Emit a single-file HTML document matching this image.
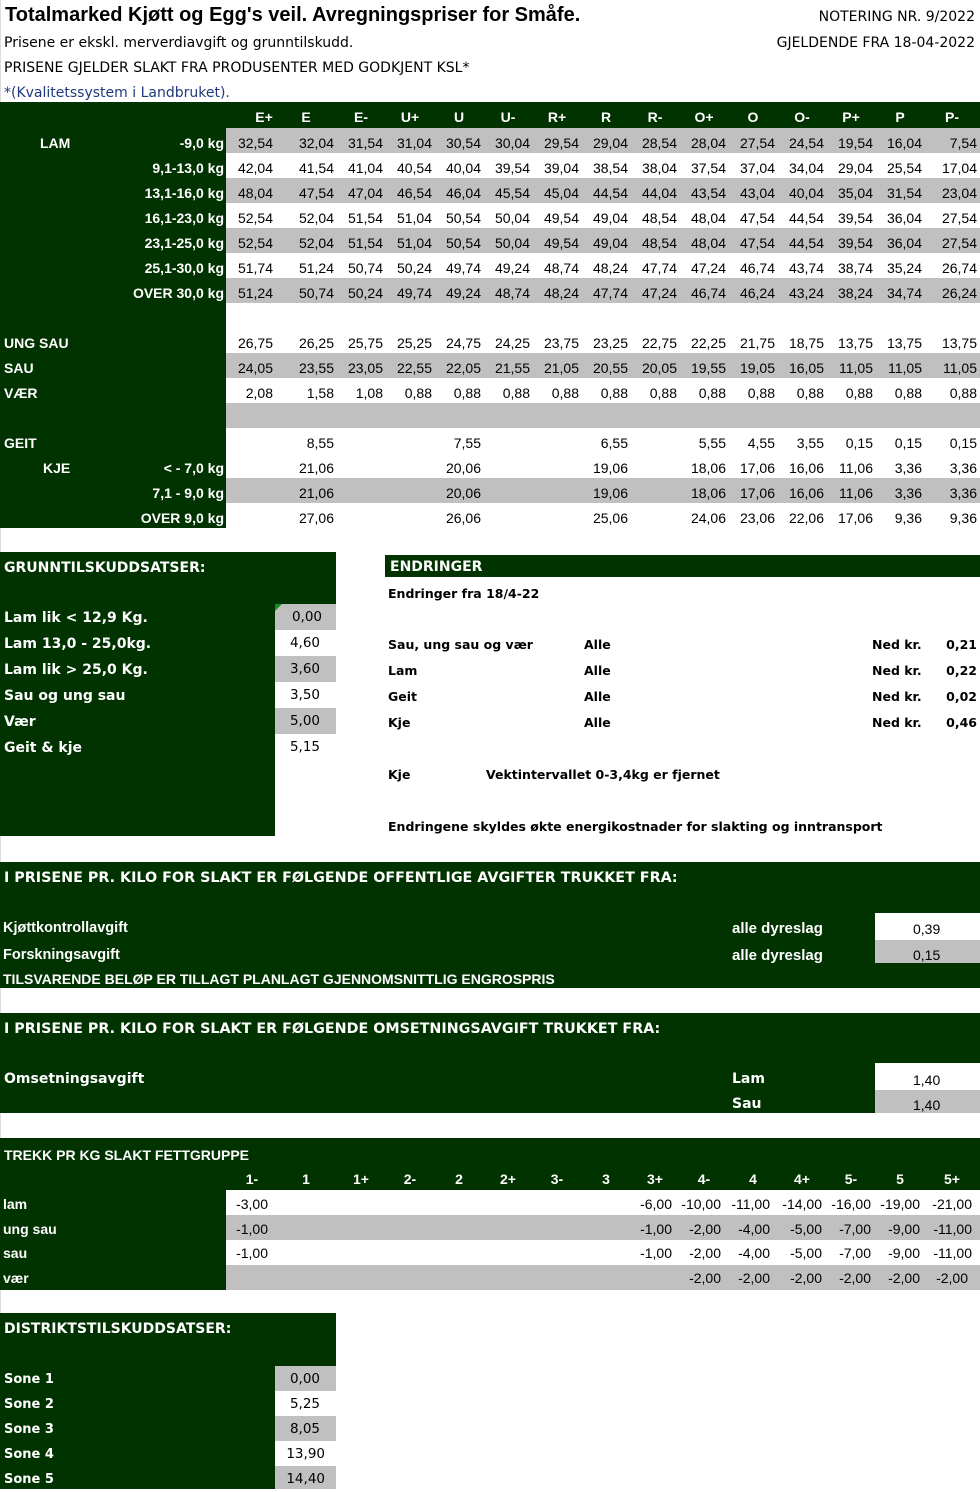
<!DOCTYPE html>
<html><head><meta charset="utf-8">
<style>
*{margin:0;padding:0;box-sizing:border-box}
body{width:980px;height:1489px;position:relative;background:#fff;font-family:"Liberation Sans",Arial,sans-serif;color:#000;overflow:hidden}
.a{position:absolute;white-space:nowrap}
.g{position:absolute;background:#003300}
.gr{position:absolute;background:#c0c0c0}
.w{color:#fff;font-weight:bold}
.vd{font-family:"DejaVu Sans",Verdana,sans-serif;font-size:14px}
.row{position:absolute;left:226px;width:754px;height:25px;display:grid;grid-template-columns:47px 61px repeat(12,49px) 55px;font-size:14px;line-height:25px;padding-top:3px}
.row span{text-align:right}
.hd{position:absolute;left:226px;width:754px;top:105px;height:25px;font-size:14px;font-weight:bold;color:#fff;line-height:25px}
.hd span{position:absolute;transform:translateX(-50%)}
.lb{position:absolute;font-size:14px;font-weight:bold;color:#fff;line-height:25px;white-space:nowrap}
.r{text-align:right}
.tk{position:absolute;left:226px;width:754px;height:25px;font-family:"Liberation Sans Narrow","Liberation Sans",sans-serif;font-size:14px;line-height:25px}
.tk span{position:absolute;text-align:right;width:60px}
.tl{position:absolute;left:3px;font-family:"Liberation Sans Narrow","Liberation Sans",sans-serif;font-size:14px;font-weight:bold;color:#fff;line-height:25px}
.cn{font-family:"Liberation Sans Narrow","Liberation Sans",sans-serif;font-weight:bold;font-size:15px;color:#fff}
.vv{position:absolute;font-family:"DejaVu Sans",Verdana,sans-serif;font-size:13.5px;text-align:right;line-height:27px}
.e{font-weight:bold;font-size:12.5px}
.s{font-size:13px}
</style></head><body>
<div style="position:absolute;left:0;top:0;width:1px;height:1489px;background:#ddd"></div>
<div class="a" style="left:5px;top:4px;font-size:20px;font-weight:bold">Totalmarked Kjøtt og Egg's veil. Avregningspriser for Småfe.</div>
<div class="a vd" style="right:5px;top:9px">NOTERING NR. 9/2022</div>
<div class="a vd" style="left:4px;top:35px">Prisene er ekskl. merverdiavgift og grunntilskudd.</div>
<div class="a vd" style="right:5px;top:35px">GJELDENDE FRA 18-04-2022</div>
<div class="a vd" style="left:4px;top:60px">PRISENE GJELDER SLAKT FRA PRODUSENTER MED GODKJENT KSL*</div>
<div class="a vd" style="left:4px;top:85px;color:#1f3a7a">*(Kvalitetssystem i Landbruket).</div>

<div class="g" style="left:0;top:102px;width:980px;height:26px"></div>
<div class="g" style="left:0;top:102px;width:226px;height:426px"></div>
<div class="gr" style="left:226px;top:128px;width:754px;height:25px"></div>
<div class="gr" style="left:226px;top:178px;width:754px;height:25px"></div>
<div class="gr" style="left:226px;top:228px;width:754px;height:25px"></div>
<div class="gr" style="left:226px;top:278px;width:754px;height:25px"></div>
<div class="gr" style="left:226px;top:353px;width:754px;height:25px"></div>
<div class="gr" style="left:226px;top:403px;width:754px;height:25px"></div>
<div class="gr" style="left:226px;top:478px;width:754px;height:25px"></div>
<div class="hd"><span style="left:38px">E+</span><span style="left:80px">E</span><span style="left:135px">E-</span><span style="left:184px">U+</span><span style="left:233px">U</span><span style="left:282px">U-</span><span style="left:331px">R+</span><span style="left:380px">R</span><span style="left:429px">R-</span><span style="left:478px">O+</span><span style="left:527px">O</span><span style="left:576px">O-</span><span style="left:625px">P+</span><span style="left:674px">P</span><span style="left:726px">P-</span></div>

<div class="lb" style="left:40px;top:131px">LAM</div>
<div class="lb r" style="right:756px;top:131px">-9,0 kg</div>
<div class="lb r" style="right:756px;top:156px">9,1-13,0 kg</div>
<div class="lb r" style="right:756px;top:181px">13,1-16,0 kg</div>
<div class="lb r" style="right:756px;top:206px">16,1-23,0 kg</div>
<div class="lb r" style="right:756px;top:231px">23,1-25,0 kg</div>
<div class="lb r" style="right:756px;top:256px">25,1-30,0 kg</div>
<div class="lb r" style="right:756px;top:281px">OVER 30,0 kg</div>
<div class="lb" style="left:4px;top:331px">UNG SAU</div>
<div class="lb" style="left:4px;top:356px">SAU</div>
<div class="lb" style="left:4px;top:381px">VÆR</div>
<div class="lb" style="left:4px;top:431px">GEIT</div>
<div class="lb" style="left:43px;top:456px">KJE</div>
<div class="lb r" style="right:756px;top:456px">&lt; - 7,0 kg</div>
<div class="lb r" style="right:756px;top:481px">7,1 - 9,0 kg</div>
<div class="lb r" style="right:756px;top:506px">OVER 9,0 kg</div>

<div class="row" style="top:128px"><span>32,54</span><span>32,04</span><span>31,54</span><span>31,04</span><span>30,54</span><span>30,04</span><span>29,54</span><span>29,04</span><span>28,54</span><span>28,04</span><span>27,54</span><span>24,54</span><span>19,54</span><span>16,04</span><span>7,54</span></div>
<div class="row" style="top:153px"><span>42,04</span><span>41,54</span><span>41,04</span><span>40,54</span><span>40,04</span><span>39,54</span><span>39,04</span><span>38,54</span><span>38,04</span><span>37,54</span><span>37,04</span><span>34,04</span><span>29,04</span><span>25,54</span><span>17,04</span></div>
<div class="row" style="top:178px"><span>48,04</span><span>47,54</span><span>47,04</span><span>46,54</span><span>46,04</span><span>45,54</span><span>45,04</span><span>44,54</span><span>44,04</span><span>43,54</span><span>43,04</span><span>40,04</span><span>35,04</span><span>31,54</span><span>23,04</span></div>
<div class="row" style="top:203px"><span>52,54</span><span>52,04</span><span>51,54</span><span>51,04</span><span>50,54</span><span>50,04</span><span>49,54</span><span>49,04</span><span>48,54</span><span>48,04</span><span>47,54</span><span>44,54</span><span>39,54</span><span>36,04</span><span>27,54</span></div>
<div class="row" style="top:228px"><span>52,54</span><span>52,04</span><span>51,54</span><span>51,04</span><span>50,54</span><span>50,04</span><span>49,54</span><span>49,04</span><span>48,54</span><span>48,04</span><span>47,54</span><span>44,54</span><span>39,54</span><span>36,04</span><span>27,54</span></div>
<div class="row" style="top:253px"><span>51,74</span><span>51,24</span><span>50,74</span><span>50,24</span><span>49,74</span><span>49,24</span><span>48,74</span><span>48,24</span><span>47,74</span><span>47,24</span><span>46,74</span><span>43,74</span><span>38,74</span><span>35,24</span><span>26,74</span></div>
<div class="row" style="top:278px"><span>51,24</span><span>50,74</span><span>50,24</span><span>49,74</span><span>49,24</span><span>48,74</span><span>48,24</span><span>47,74</span><span>47,24</span><span>46,74</span><span>46,24</span><span>43,24</span><span>38,24</span><span>34,74</span><span>26,24</span></div>
<div class="row" style="top:328px"><span>26,75</span><span>26,25</span><span>25,75</span><span>25,25</span><span>24,75</span><span>24,25</span><span>23,75</span><span>23,25</span><span>22,75</span><span>22,25</span><span>21,75</span><span>18,75</span><span>13,75</span><span>13,75</span><span>13,75</span></div>
<div class="row" style="top:353px"><span>24,05</span><span>23,55</span><span>23,05</span><span>22,55</span><span>22,05</span><span>21,55</span><span>21,05</span><span>20,55</span><span>20,05</span><span>19,55</span><span>19,05</span><span>16,05</span><span>11,05</span><span>11,05</span><span>11,05</span></div>
<div class="row" style="top:378px"><span>2,08</span><span>1,58</span><span>1,08</span><span>0,88</span><span>0,88</span><span>0,88</span><span>0,88</span><span>0,88</span><span>0,88</span><span>0,88</span><span>0,88</span><span>0,88</span><span>0,88</span><span>0,88</span><span>0,88</span></div>
<div class="row" style="top:428px"><span></span><span>8,55</span><span></span><span></span><span>7,55</span><span></span><span></span><span>6,55</span><span></span><span>5,55</span><span>4,55</span><span>3,55</span><span>0,15</span><span>0,15</span><span>0,15</span></div>
<div class="row" style="top:453px"><span></span><span>21,06</span><span></span><span></span><span>20,06</span><span></span><span></span><span>19,06</span><span></span><span>18,06</span><span>17,06</span><span>16,06</span><span>11,06</span><span>3,36</span><span>3,36</span></div>
<div class="row" style="top:478px"><span></span><span>21,06</span><span></span><span></span><span>20,06</span><span></span><span></span><span>19,06</span><span></span><span>18,06</span><span>17,06</span><span>16,06</span><span>11,06</span><span>3,36</span><span>3,36</span></div>
<div class="row" style="top:503px"><span></span><span>27,06</span><span></span><span></span><span>26,06</span><span></span><span></span><span>25,06</span><span></span><span>24,06</span><span>23,06</span><span>22,06</span><span>17,06</span><span>9,36</span><span>9,36</span></div>

<div class="g" style="left:0;top:552px;width:336px;height:52px"></div>
<div class="g" style="left:0;top:552px;width:275px;height:284px"></div>
<div class="a vd w" style="left:4px;top:560px">GRUNNTILSKUDDSATSER:</div>
<div class="gr" style="left:275px;top:604px;width:61px;height:26px"></div>
<div style="position:absolute;left:275px;top:604px;width:0;height:0;border-top:7px solid #1a8a1a;border-right:7px solid transparent"></div>
<div class="gr" style="left:275px;top:656px;width:61px;height:26px"></div>
<div class="gr" style="left:275px;top:708px;width:61px;height:26px"></div>
<div class="a vd w" style="left:4px;top:610px">Lam lik &lt; 12,9 Kg.</div>
<div class="a vd w" style="left:4px;top:636px">Lam 13,0 - 25,0kg.</div>
<div class="a vd w" style="left:4px;top:662px">Lam lik &gt; 25,0 Kg.</div>
<div class="a vd w" style="left:4px;top:688px">Sau og ung sau</div>
<div class="a vd w" style="left:4px;top:714px">Vær</div>
<div class="a vd w" style="left:4px;top:740px">Geit &amp; kje</div>
<div class="vv" style="left:275px;width:47px;top:604px">0,00</div>
<div class="vv" style="left:275px;width:45px;top:630px">4,60</div>
<div class="vv" style="left:275px;width:45px;top:656px">3,60</div>
<div class="vv" style="left:275px;width:45px;top:682px">3,50</div>
<div class="vv" style="left:275px;width:45px;top:708px">5,00</div>
<div class="vv" style="left:275px;width:45px;top:734px">5,15</div>

<div class="g" style="left:385px;top:555px;width:595px;height:22px"></div>
<div class="a vd w" style="left:390px;top:559px">ENDRINGER</div>
<div class="a vd e" style="left:388px;top:586px">Endringer fra 18/4-22</div>
<div class="a vd e" style="left:388px;top:637px">Sau, ung sau og vær</div>
<div class="a vd e" style="left:388px;top:663px">Lam</div>
<div class="a vd e" style="left:388px;top:689px">Geit</div>
<div class="a vd e" style="left:388px;top:715px">Kje</div>
<div class="a vd e" style="left:584px;top:637px">Alle</div>
<div class="a vd e" style="left:584px;top:663px">Alle</div>
<div class="a vd e" style="left:584px;top:689px">Alle</div>
<div class="a vd e" style="left:584px;top:715px">Alle</div>
<div class="a vd e" style="left:872px;top:637px">Ned kr.</div>
<div class="a vd e" style="left:872px;top:663px">Ned kr.</div>
<div class="a vd e" style="left:872px;top:689px">Ned kr.</div>
<div class="a vd e" style="left:872px;top:715px">Ned kr.</div>
<div class="a vd e" style="right:3px;top:637px">0,21</div>
<div class="a vd e" style="right:3px;top:663px">0,22</div>
<div class="a vd e" style="right:3px;top:689px">0,02</div>
<div class="a vd e" style="right:3px;top:715px">0,46</div>
<div class="a vd e" style="left:388px;top:767px">Kje</div>
<div class="a vd e" style="left:486px;top:767px">Vektintervallet 0-3,4kg er fjernet</div>
<div class="a vd e" style="left:388px;top:819px">Endringene skyldes økte energikostnader for slakting og inntransport</div>

<div class="g" style="left:0;top:862px;width:980px;height:126px"></div>
<div class="a vd w" style="left:4px;top:870px;font-size:14.3px">I PRISENE PR. KILO FOR SLAKT ER FØLGENDE OFFENTLIGE AVGIFTER TRUKKET FRA:</div>
<div class="a cn" style="left:3px;top:920px;font-size:14.5px">Kjøttkontrollavgift</div>
<div class="a cn" style="left:3px;top:947px;font-size:14.5px">Forskningsavgift</div>
<div class="a cn" style="left:3px;top:971px;font-size:14px">TILSVARENDE BELØP ER TILLAGT PLANLAGT GJENNOMSNITTLIG ENGROSPRIS</div>
<div class="a cn" style="left:732px;top:920px">alle dyreslag</div>
<div class="a cn" style="left:732px;top:947px">alle dyreslag</div>
<div style="position:absolute;left:875px;top:913px;width:105px;height:27px;background:#fff"></div>
<div class="gr" style="left:875px;top:940px;width:105px;height:23px"></div>
<div class="a" style="left:913px;top:921px;font-family:'Liberation Sans Narrow','Liberation Sans',sans-serif;font-size:14px">0,39</div>
<div class="a" style="left:913px;top:947px;font-family:'Liberation Sans Narrow','Liberation Sans',sans-serif;font-size:14px">0,15</div>

<div class="g" style="left:0;top:1013px;width:980px;height:100px"></div>
<div class="a vd w" style="left:4px;top:1021px;font-size:14.3px">I PRISENE PR. KILO FOR SLAKT ER FØLGENDE OMSETNINGSAVGIFT TRUKKET FRA:</div>
<div class="a vd w" style="left:4px;top:1071px">Omsetningsavgift</div>
<div class="a vd w" style="left:732px;top:1071px">Lam</div>
<div class="a vd w" style="left:732px;top:1096px">Sau</div>
<div style="position:absolute;left:875px;top:1063px;width:105px;height:27px;background:#fff"></div>
<div class="gr" style="left:875px;top:1090px;width:105px;height:23px"></div>
<div class="a" style="left:913px;top:1072px;font-family:'Liberation Sans Narrow','Liberation Sans',sans-serif;font-size:14px">1,40</div>
<div class="a" style="left:913px;top:1097px;font-family:'Liberation Sans Narrow','Liberation Sans',sans-serif;font-size:14px">1,40</div>

<div class="g" style="left:0;top:1138px;width:980px;height:52px"></div>
<div class="g" style="left:0;top:1138px;width:226px;height:152px"></div>
<div class="gr" style="left:226px;top:1215px;width:754px;height:25px"></div>
<div class="gr" style="left:226px;top:1265px;width:754px;height:25px"></div>
<div class="a cn" style="left:4px;top:1147px;font-size:14px">TREKK PR KG SLAKT FETTGRUPPE</div>
<div class="hd" style="top:1167px;font-family:'Liberation Sans Narrow','Liberation Sans',sans-serif"><span style="left:26px">1-</span><span style="left:80px">1</span><span style="left:135px">1+</span><span style="left:184px">2-</span><span style="left:233px">2</span><span style="left:282px">2+</span><span style="left:331px">3-</span><span style="left:380px">3</span><span style="left:429px">3+</span><span style="left:478px">4-</span><span style="left:527px">4</span><span style="left:576px">4+</span><span style="left:625px">5-</span><span style="left:674px">5</span><span style="left:726px">5+</span></div>
<div class="tl" style="top:1192px">lam</div>
<div class="tl" style="top:1217px">ung sau</div>
<div class="tl" style="top:1241px">sau</div>
<div class="tl" style="top:1266px">vær</div>
<div class="tk" style="top:1192px"><span style="left:-18px">-3,00</span><span style="left:386px">-6,00</span><span style="left:435px">-10,00</span><span style="left:484px">-11,00</span><span style="left:536px">-14,00</span><span style="left:585px">-16,00</span><span style="left:634px">-19,00</span><span style="left:686px">-21,00</span></div>
<div class="tk" style="top:1217px"><span style="left:-18px">-1,00</span><span style="left:386px">-1,00</span><span style="left:435px">-2,00</span><span style="left:484px">-4,00</span><span style="left:536px">-5,00</span><span style="left:585px">-7,00</span><span style="left:634px">-9,00</span><span style="left:686px">-11,00</span></div>
<div class="tk" style="top:1241px"><span style="left:-18px">-1,00</span><span style="left:386px">-1,00</span><span style="left:435px">-2,00</span><span style="left:484px">-4,00</span><span style="left:536px">-5,00</span><span style="left:585px">-7,00</span><span style="left:634px">-9,00</span><span style="left:686px">-11,00</span></div>
<div class="tk" style="top:1266px"><span style="left:435px">-2,00</span><span style="left:484px">-2,00</span><span style="left:536px">-2,00</span><span style="left:585px">-2,00</span><span style="left:634px">-2,00</span><span style="left:682px">-2,00</span></div>

<div class="g" style="left:0;top:1313px;width:336px;height:53px"></div>
<div class="g" style="left:0;top:1313px;width:275px;height:176px"></div>
<div class="a vd w" style="left:4px;top:1321px">DISTRIKTSTILSKUDDSATSER:</div>
<div class="gr" style="left:275px;top:1366px;width:61px;height:25px"></div>
<div class="gr" style="left:275px;top:1416px;width:61px;height:25px"></div>
<div class="gr" style="left:275px;top:1466px;width:61px;height:23px"></div>
<div class="a vd w s" style="left:4px;top:1372px">Sone 1</div>
<div class="a vd w s" style="left:4px;top:1397px">Sone 2</div>
<div class="a vd w s" style="left:4px;top:1422px">Sone 3</div>
<div class="a vd w s" style="left:4px;top:1447px">Sone 4</div>
<div class="a vd w s" style="left:4px;top:1472px">Sone 5</div>
<div class="vv" style="left:275px;width:45px;top:1367px;line-height:25px">0,00</div>
<div class="vv" style="left:275px;width:45px;top:1392px;line-height:25px">5,25</div>
<div class="vv" style="left:275px;width:45px;top:1417px;line-height:25px">8,05</div>
<div class="vv" style="left:275px;width:50px;top:1442px;line-height:25px">13,90</div>
<div class="vv" style="left:275px;width:50px;top:1467px;line-height:25px">14,40</div>
</body></html>
